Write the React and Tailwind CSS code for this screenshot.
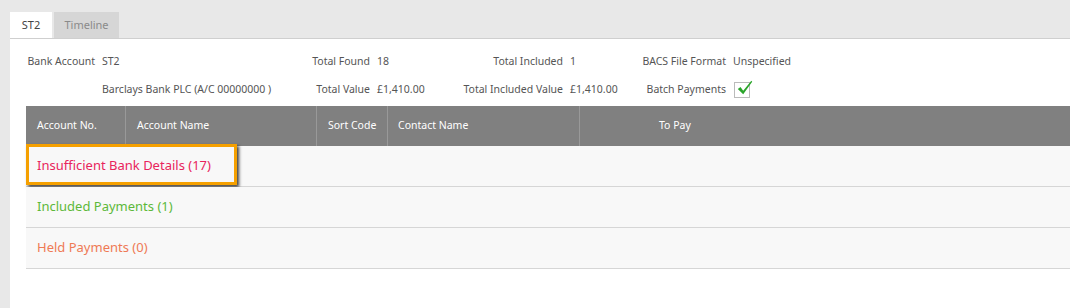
import React from 'react';

const font = { fontFamily: '"Segoe UI", "Noto Sans", "Open Sans", sans-serif' };

const Label = ({ children }) => (
    <span className="text-right pr-[7px] text-[#555] whitespace-nowrap">{children}</span>
);

const Value = ({ children }) => (
    <span className="text-[#555] whitespace-nowrap">{children}</span>
);

const CheckBox = () => (
    <div className="relative w-[16px] h-[16px] border border-[#bbb] bg-white">
        <svg viewBox="0 0 20 20" className="absolute -top-[4px] left-[1px] w-[18px] h-[18px]">
            <path d="M2 11 L5 9 L8 13 L17 2 L18 3 L8 17 Z" fill="#2aa52a" />
        </svg>
    </div>
);

const sections = [
    { label: 'Insufficient Bank Details (17)', color: 'text-[#e8245c]', highlight: true },
    { label: 'Included Payments (1)', color: 'text-[#5db83a]' },
    { label: 'Held Payments (0)', color: 'text-[#ef7a55]' },
];

const App = () => {
    return (
        <div className="w-[1070px] h-[308px] bg-[#e8e8e8] text-[10.5px] overflow-hidden" style={font}>
            {/* Tabs */}
            <div className="flex gap-[2px] pl-[10px] pt-[12px] h-[38px] text-[11px]">
                <div className="w-[42px] bg-white flex items-center justify-center text-[#444]">ST2</div>
                <div className="w-[65px] bg-[#d6d6d6] flex items-center justify-center text-[#8a8a8a]">Timeline</div>
            </div>

            <div className="ml-[10px] h-[270px] bg-white border-t border-[#cfcfcf]">
                {/* Summary */}
                <div className="grid grid-cols-[92px_198px_77px_83px_110px_70px_93px_1fr] grid-rows-[16px_16px] gap-y-[12px] items-center pt-[15px] h-[67px]">
                    <Label>Bank Account</Label>
                    <Value>ST2</Value>
                    <Label>Total Found</Label>
                    <Value>18</Value>
                    <Label>Total Included</Label>
                    <Value>1</Value>
                    <Label>BACS File Format</Label>
                    <Value>Unspecified</Value>

                    <Label />
                    <Value>Barclays Bank PLC (A/C 00000000 )</Value>
                    <Label>Total Value</Label>
                    <Value>£1,410.00</Value>
                    <Label>Total Included Value</Label>
                    <Value>£1,410.00</Value>
                    <Label>Batch Payments</Label>
                    <div className="pl-[1px]">
                        <CheckBox />
                    </div>
                </div>

                {/* Table */}
                <div className="ml-[16px]">
                    <div className="flex h-[40px] bg-[#808080] text-white text-[10.5px]">
                        <div className="w-[100px] flex items-center pl-[11px] border-r border-[#999]">Account No.</div>
                        <div className="w-[191px] flex items-center pl-[11px] border-r border-[#999]">Account Name</div>
                        <div className="w-[71px] flex items-center pl-[11px] border-r border-[#999]">Sort Code</div>
                        <div className="w-[192px] flex items-center pl-[10px] border-r border-[#999]">Contact Name</div>
                        <div className="flex-1 flex items-center pl-[79px]">To Pay</div>
                    </div>
                    {sections.map((s) => (
                        <div key={s.label} className="relative h-[41px] bg-[#f8f8f8] border-b border-[#d6d6d6] flex items-center pl-[11px]">
                            <span className={`${s.color} text-[13px]`}>{s.label}</span>
                            {s.highlight && (
                                <div className="absolute left-0 top-[-2px] w-[211px] h-[41px] border-[3px] border-[#f5a000] shadow-[2px_2px_3px_rgba(0,0,0,0.75)]" />
                            )}
                        </div>
                    ))}
                </div>
            </div>
        </div>
    );
};

export default App;
